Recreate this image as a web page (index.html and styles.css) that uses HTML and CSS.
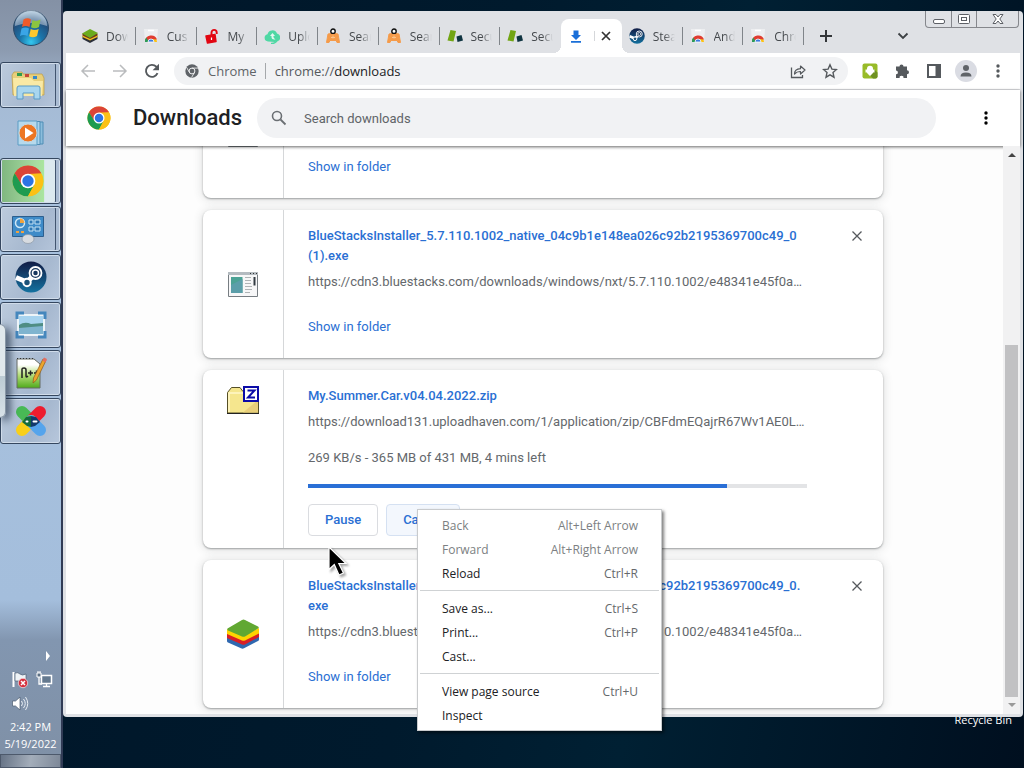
FILE: index.html
```html
<!DOCTYPE html>
<html lang="en">
<head>
<meta charset="utf-8">
<meta name="viewport" content="width=device-width, initial-scale=1">
<title>Downloads</title>
<link rel="stylesheet" href="styles.css">
</head>
<body>
<svg class="sprite" aria-hidden="true">
  <symbol id="chrome" viewBox="0 0 48 48">
    <circle cx="24" cy="24" r="23" fill="#fbc116"/>
    <path d="M4 12.500A23 23 0 0 1 44 12.500L24 13.500 14 30Z" fill="#db4437"/>
    <path d="M4 12.500A23 23 0 0 0 24 47L33.500 29.500H14.500Z" fill="#1e9b50"/>
    <path d="M24 13.500H44.500A23 23 0 0 1 24 47L33.500 29.500Z" fill="#fbc116"/>
    <circle cx="24" cy="24" r="11" fill="#fff"/>
    <circle cx="24" cy="24" r="8.500" fill="#2c74e4"/>
  </symbol>
  <symbol id="chrome-mono" viewBox="0 0 24 24">
    <circle cx="12" cy="12" r="11.500" fill="#5f6368"/>
    <circle cx="12" cy="12" r="5" fill="none" stroke="#f1f2f4" stroke-width="1.700"/>
    <path d="M12 7H22.500M7.700 14.500 2.500 5.500M16.300 14.500 11.300 23" stroke="#f1f2f4" stroke-width="1.500"/>
  </symbol>
  <symbol id="bluestacks" viewBox="0 0 32 30">
    <path d="M0 16v6q0 1 1 1.500l13 5.800q1.500.7 3 0L31 22q1-.5 1-1.500V15L16 22Z" fill="#2f68b0"/>
    <path d="M0 13v6l15 6.500q1.500.6 3 0L32 18v-5L16 20Z" fill="#d81f26"/>
    <path d="M0 10v5l15 6.500q1.500.6 3 0L32 14.500V9L16 17Z" fill="#ffd400"/>
    <path d="M.5 9.500 15 1q1.500-.8 3 0l13 6.500q1.500 1 0 2L18 17.500q-1.500.7-3 0L1 11.500q-1-1-.5-2Z" fill="#61a832"/>
  </symbol>
  <symbol id="bluestacks-dark" viewBox="0 0 32 30">
    <path d="M1 15v6l15 8 15-8v-6Z" fill="#2b2f3a"/>
    <path d="M1 12v5l15 7 15-7v-5Z" fill="#f3c11b"/>
    <path d="M1 10v4l15 7 15-7v-4Z" fill="#6d3b1c"/>
    <path d="M0 10 16 1l16 8-16 10Z" fill="#6aab1d"/>
  </symbol>
  <symbol id="webstore" viewBox="0 0 16 16">
    <path d="M1 1h14l-1 13H2Z" fill="#edeef0"/>
    <path d="M5 2.500h6" stroke="#fff" stroke-width="1.500"/>
    <path d="M2 14a6 6 0 0 1 12 0Z" fill="#fbc116"/>
    <path d="M2 13.500a6.200 6.200 0 0 1 12-2L8 11 5.500 14Z" fill="#e03c31"/>
    <path d="M2 14q-.2-3 1.200-4.500L6 14Z" fill="#2a9d58"/>
    <path d="M5 14a3 3 0 0 1 6 0Z" fill="#3c7be0" stroke="#fff" stroke-width=".8"/>
  </symbol>
  <symbol id="lock" viewBox="0 0 16 16">
    <path d="M7.500 7V4.500a2.600 2.600 0 0 1 5.200 0V6" fill="none" stroke="#e20612" stroke-width="1.900"/>
    <path d="m2 8 9-1.500 1 7L3.500 15Z" fill="#e20612" stroke="#e20612" stroke-width="1.500" stroke-linejoin="round"/>
    <path d="M7.500 9.500v2.500" stroke="#fff" stroke-width="1.200"/>
  </symbol>
  <symbol id="cloud" viewBox="0 0 16 16">
    <path d="M4 13.500a3.700 3.700 0 0 1-.5-7.300A5 5 0 0 1 13 5.500a4 4 0 0 1 1 7.500l-3 1Z" fill="#4fd8a4"/>
    <path d="M11.500 11.500Q7 12 7.500 8H6l2.500-3L11 8H9.300q0 2.500 2.200 3.500Z" fill="#e4f7f0"/>
    <path d="M7 15.500q3 .5 6-2.500" stroke="#4fd8a4" fill="none" stroke-width="1.500"/>
  </symbol>
  <symbol id="seat" viewBox="0 0 16 16">
    <path d="M3 6q5-1.500 10 0l1.500 8.500h-2.500L11 12.500H5L4 14.500H1.500Z" fill="#f59b4a" stroke="#f59b4a" stroke-linejoin="round"/>
    <path d="M8 7.500v3m-2-1h4" stroke="#fbc48c"/>
    <circle cx="8" cy="3.200" r="2.200" fill="#fff" stroke="#111" stroke-width="1.400"/>
  </symbol>
  <symbol id="secure" viewBox="0 0 16 16">
    <path d="M3.500 2 9 3 6.500 13.500.500 12.500Z" fill="#72a514"/>
    <path d="m9.500 8.500 5-1.500 1.500 5.500-5.500 1.500Z" fill="#0f3440"/>
  </symbol>
  <symbol id="steam" viewBox="0 0 32 32">
    <circle cx="16" cy="16" r="15.500" fill="url(#steam-fill)"/>
    <path d="M1 16.500 12 21l8-8" fill="none" stroke="#fff" stroke-width="5"/>
    <circle cx="20.500" cy="12" r="6" fill="#17365c" stroke="#fff" stroke-width="1.800"/>
    <circle cx="20.500" cy="12" r="3" fill="none" stroke="#fff" stroke-width="1.500"/>
    <circle cx="12" cy="21.500" r="3.700" fill="#1b5379" stroke="#fff" stroke-width="2"/>
  </symbol>
  <linearGradient id="steam-fill" x2="0" y2="1"><stop stop-color="#111c45"/><stop offset="1" stop-color="#1472a0"/></linearGradient>
  <symbol id="exe" viewBox="0 0 32 32">
    <path d="M1.500 4.500h29v24h-29Z" fill="#f7f7f8" stroke="#777d82"/>
    <path d="M1 4h30v3H1Z" fill="#b4bbc0"/>
    <path d="M23 5.500h1m2 0h1m2 0h1" stroke="#333"/>
    <path d="M4 9h11.500v16H4Z" fill="#4ca295"/>
    <path d="M4 17v8h11.500V11Z" fill="#5b9ea9"/>
    <path d="M18 9.500h6m-6 3h6m-6 3h6m-6 3h7m-7 3h7m-7 3h5" stroke="#afb4b6"/>
    <path d="M27.500 9v8.500" stroke="#333b42" stroke-width="2"/>
  </symbol>
  <symbol id="zip" viewBox="0 0 32 32">
    <path d="M.5 28V7.500l4-5H13l3 4h15.500V28Z" fill="#f5e68e" stroke="#554f27"/>
    <path d="M1.500 8h29M2 8v19" stroke="#fff8c9" stroke-width="1.500"/>
    <path d="M16 27.500 31 15v12.500Z" fill="#e9cf7a"/>
    <path d="M0 28.500h32" stroke="#222"/>
    <path d="M17 2h14v14h-14Z" fill="#fff" stroke="#0b0ba8" stroke-width="2"/>
    <path d="M20.500 5.500h7l-6.500 7h7" fill="none" stroke="#0b0ba8" stroke-width="2"/>
  </symbol>
  <symbol id="cross" viewBox="0 0 16 16"><path d="m3.500 3.500 9 9m0-9-9 9" stroke="currentColor" stroke-width="1.300"/></symbol>
  <symbol id="dots" viewBox="0 0 16 16"><circle cx="8" cy="3" r="1.700"/><circle cx="8" cy="8" r="1.700"/><circle cx="8" cy="13" r="1.700"/></symbol>
</svg>

<div class="desktop">
  <nav class="taskbar" aria-label="Taskbar">
    <button class="start" aria-label="Start">
      <svg width="38" height="38" viewBox="0 0 38 38">
        <defs><radialGradient id="orb" cx=".5" cy=".9" r=".9"><stop stop-color="#35c8ef"/><stop offset=".35" stop-color="#1a76ab"/><stop offset=".7" stop-color="#23507e"/><stop offset="1" stop-color="#9ec0da"/></radialGradient></defs>
        <circle cx="19" cy="19" r="17.500" fill="url(#orb)" stroke="#2b4967"/>
        <path d="M3 17A16 16 0 0 1 35 17Q19 11 3 17Z" fill="#fff" opacity=".4"/>
        <path d="M11.500 10.500q4-2.500 7.500 0l-1.500 7.500q-4-2-7.500 0Z" fill="#ef5a29"/>
        <path d="M20.500 11q4 2 8-.5L27 18q-4 2.500-8 .3Z" fill="#8cc63f"/>
        <path d="M9.500 19.500q4-2 7.500 0L15.500 27q-4-2-7.500 0Z" fill="#3aa5e6"/>
        <path d="M18.700 20q4 2 8 0L25 27q-4 2.500-7.800.3Z" fill="#fdc82f"/>
      </svg>
    </button>
    <button class="task task--stack" aria-label="File Explorer">
      <svg width="34" height="30" viewBox="0 0 34 30">
        <path d="M1 5 3 2h8l1 2h19l2 4v17H2Z" fill="#e8cf7b" stroke="#bb9b45" stroke-width=".7"/>
        <path d="M6 3h5v3H6Z" fill="#2f9b4e"/><path d="M14 4h4v3h-4Z" fill="#c6473a"/><path d="M22 6h4v3h-4Z" fill="#3788c8"/>
        <path d="M2 8h18l3 3h9l-1 15H3Z" fill="#f9e9a5"/>
        <path d="M6 29V18q0-2 2-2h19q2 0 2 2v11h-6v-6H12v6Z" fill="#a8d6ef" stroke="#5a9bc5"/>
      </svg>
    </button>
    <button class="task task--plain" aria-label="Media Player">
      <svg width="28" height="28" viewBox="0 0 28 28">
        <path d="M12 3h14v22H12Z" fill="#8bbddc" stroke="#4f8db5"/><path d="M10 2.500h13v23H10Z" fill="#a9d2ea" stroke="#4f8db5"/>
        <path d="M1 2h19v24H1Z" fill="#b6d9ec" stroke="#5b9cc4"/><circle cx="11" cy="14" r="9" fill="#ed7622" stroke="#c7d7df"/><path d="M8 8.500v11l8.500-5.500Z" fill="#fff"/>
      </svg>
    </button>
    <button class="task task--stack task--active" aria-label="Google Chrome"><svg width="32" height="32"><use href="#chrome"/></svg></button>
    <button class="task task--stack" aria-label="Control Panel">
      <svg width="34" height="30" viewBox="0 0 34 30">
        <path d="M1.500 2.500h31v20h-31Z" fill="#3e8bc8" stroke="#2d5f8e"/><circle cx="9" cy="9" r="4.500" fill="none" stroke="#cfe7f5" stroke-width="1.500"/><path d="M9 4.500A4.500 4.500 0 0 1 13.500 9H9Z" fill="#f2a33c"/>
        <path d="M18 6h4v4h-4Zm6 0h5v4h-5Zm-6 7h4v4h-4Zm6 0h5v4h-5Z" fill="#2d76b3" stroke="#c5e2f4"/><path d="M5 18h3m2 0h3" stroke="#f2a33c" stroke-width="2"/>
        <ellipse cx="17" cy="25" rx="6" ry="4.500" fill="#d7dbe0" stroke="#8d98a5" stroke-width=".7"/>
      </svg>
    </button>
    <button class="task" aria-label="Steam"><svg width="32" height="32"><use href="#steam"/></svg></button>
    <button class="task" aria-label="Photo Viewer">
      <svg width="32" height="28" viewBox="0 0 32 28">
        <path d="M3 4h26v20H3Z" fill="#a7d3ef" stroke="#edf4f8" stroke-width="2"/><path d="M4 14q6-4 12-1l12-1v11H4Z" fill="#4f8d84"/><path d="M4 17l24-2v8H4Z" fill="#7fb4cf"/>
        <path d="M2 8V2h7M23 2h7v6M2 20v6h7m14 0h7v-6" fill="none" stroke="#4587bd" stroke-width="3"/>
      </svg>
    </button>
    <button class="task" aria-label="Notepad++">
      <svg width="34" height="34" viewBox="0 0 34 34">
        <defs><linearGradient id="npp" x2="0" y2="1"><stop offset=".2" stop-color="#fff"/><stop offset=".55" stop-color="#b6de7b"/><stop offset="1" stop-color="#4faa1b"/></linearGradient></defs>
        <path d="M3 3h17l6 5v24H3Z" fill="url(#npp)" stroke="#676c65"/><path d="M3 2.500h18" stroke="#333" stroke-dasharray="1 2"/>
        <path d="M8 22v-9q0-1 2-1 2 0 2 2v6q0 2 2 0M14 17h5m-2.500-2.500v5M20 17h5m-2.500-2.500v5" fill="none" stroke="#222" stroke-width="1.500"/>
        <path d="m19 27 .5-5L29 3l3 1.500L22.500 24Z" fill="#eba52d" stroke="#8d5a1a" stroke-width=".7"/><path d="m28.500 4.500 1.500-3 3 1.500-1.500 3.500Z" fill="#e46d5f"/>
      </svg>
    </button>
    <button class="task" aria-label="Game launcher">
      <svg width="34" height="34" viewBox="0 0 34 34" stroke-width="12" stroke-linecap="round">
        <path d="m8 8 9 9" stroke="#48b955"/><path d="m26 8-9 9" stroke="#ed1c2e"/><path d="m8 26 9-9" stroke="#f8cf19"/><path d="m26 26-9-9" stroke="#55a4ec"/>
        <path d="m17 12 5 1 4 5-5 4-4 1Z" fill="#12396c" stroke="none"/><path d="m17 12-5 1-4 5 5 4 4 1Z" fill="#126b3d" stroke="none"/>
        <path d="M12.500 17.500h1m6 0h3" stroke="#fff" stroke-width="2"/>
      </svg>
    </button>

    <div class="tray">
      <button class="tray-more" aria-label="Show hidden icons"><svg width="6" height="10" viewBox="0 0 6 10"><path d="m1 0 4 5-4 5Z" fill="#fff"/></svg></button>
      <div class="tray-icons">
        <svg width="18" height="18" viewBox="0 0 18 18"><path d="M2.500 1v15" stroke="#fff" stroke-width="2"/><path d="M4 2q3-1 5 1t6 0v7H4Z" fill="#eef3f7" stroke="#4f6074" stroke-width=".7"/><circle cx="12" cy="12" r="4.700" fill="#d5303e" stroke="#fff" stroke-width=".6"/><path d="m10 10 4 4m0-4-4 4" stroke="#fff" stroke-width="1.500"/></svg>
        <svg width="18" height="18" viewBox="0 0 18 18"><path d="M5.500 4.500h10v8h-10Z" fill="#64798f" stroke="#fff" stroke-width="1.500"/><path d="M10.500 13v2M7 15.500h7M3 5v8h3" fill="none" stroke="#fff" stroke-width="1.300"/><path d="M1 2h4v4H1ZM2 0v2m2-2v2" fill="#5c7085" stroke="#fff"/></svg>
        <svg width="18" height="18" viewBox="0 0 18 18"><path d="M1.500 6h3L9 2v13l-4.500-4h-3Z" fill="#fff" stroke="#4b5c70" stroke-width=".7"/><path d="M10.500 6q2 2.500 0 5m2-7q3.500 4.500 0 9m2-11q4.500 6.500 0 13" fill="none" stroke="#e9eff5"/></svg>
      </div>
      <div class="clock"><time>2:42 PM</time><time>5/19/2022</time></div>
      <button class="show-desktop" aria-label="Show desktop"></button>
    </div>
    <div class="peek"></div>
  </nav>

  <div class="stage">
    <span class="shortcut">Recycle Bin</span>
    <div class="window">
      <header class="tabstrip">
        <div class="tabs">
          <button class="tab"><svg><use href="#bluestacks-dark"/></svg><span>Dow</span></button>
          <button class="tab"><svg><use href="#webstore"/></svg><span>Cus</span></button>
          <button class="tab"><svg><use href="#lock"/></svg><span>My</span></button>
          <button class="tab"><svg><use href="#cloud"/></svg><span>Uplo</span></button>
          <button class="tab"><svg><use href="#seat"/></svg><span>Sear</span></button>
          <button class="tab"><svg><use href="#seat"/></svg><span>Sear</span></button>
          <button class="tab"><svg><use href="#secure"/></svg><span>Secu</span></button>
          <button class="tab tab--last"><svg><use href="#secure"/></svg><span>Secu</span></button>
          <div class="tab tab--current">
            <svg viewBox="0 0 16 16"><path d="M5.500 2.500h5V7H13l-5 5-5-5h2.500ZM3 13h10v1.800H3Z" fill="#1a6fd8"/></svg>
            <i></i>
            <button class="tab-close" aria-label="Close tab"><svg viewBox="0 0 14 14"><path d="m3 3 8 8m0-8-8 8" stroke="currentColor" stroke-width="1.700"/></svg></button>
          </div>
          <button class="tab"><svg><use href="#steam"/></svg><span>Stea</span></button>
          <button class="tab"><svg><use href="#webstore"/></svg><span>And</span></button>
          <button class="tab"><svg><use href="#webstore"/></svg><span>Chro</span></button>
        </div>
        <button class="new-tab" aria-label="New tab"><svg width="14" height="14" viewBox="0 0 14 14"><path d="M7 1v12M1 7h12" stroke="#333639" stroke-width="2"/></svg></button>
        <button class="tab-search" aria-label="Search tabs"><svg width="12" height="8" viewBox="0 0 12 8"><path d="m1.500 1.500 4.500 4.500 4.500-4.500" fill="none" stroke="#3c4043" stroke-width="1.800"/></svg></button>
        <div class="caption">
          <button aria-label="Minimize"><svg width="14" height="14" viewBox="0 0 14 14"><rect x="1.500" y="7.500" width="11" height="4" rx="1.500"/></svg></button>
          <button aria-label="Restore"><svg width="14" height="14" viewBox="0 0 14 14"><rect x="1.500" y="2.500" width="11" height="9" rx="1"/><rect x="4.500" y="5.500" width="5" height="3"/></svg></button>
          <button aria-label="Close"><svg width="14" height="14" viewBox="0 0 14 14"><path d="M2 2.500h3l2 2.500 2-2.500h3L8.800 7l3.200 4.500H9L7 9l-2 2.500H2L5.200 7Z"/></svg></button>
        </div>
      </header>

      <div class="toolbar">
        <button class="tool tool--off" aria-label="Back"><svg viewBox="0 0 16 16"><path d="M15 8H2m6-6L2 8l6 6" fill="none" stroke="currentColor" stroke-width="1.500"/></svg></button>
        <button class="tool tool--off" aria-label="Forward"><svg viewBox="0 0 16 16"><path d="M1 8h13M8 2l6 6-6 6" fill="none" stroke="currentColor" stroke-width="1.500"/></svg></button>
        <button class="tool" aria-label="Reload"><svg viewBox="0 0 16 16"><path d="M13.500 10.200A6 6 0 1 1 12.300 3.700L14 5.500" fill="none" stroke="currentColor" stroke-width="1.900"/><path d="M15 .8v6.400H8.600Z" fill="currentColor"/></svg></button>
        <div class="omnibox">
          <svg class="omnibox-logo"><use href="#chrome-mono"/></svg>
          <span class="origin">Chrome</span>
          <span class="url">chrome://<b>downloads</b></span>
          <button class="tool" aria-label="Share"><svg viewBox="0 0 16 16"><path d="M1.500 4.500v10h11V12" fill="none" stroke="currentColor" stroke-width="1.300"/><path d="M4.500 11q0-5 6-5.300V3l4.500 4-4.500 4V8.500Q7 8.300 4.500 11Z" fill="none" stroke="currentColor" stroke-width="1.200" stroke-linejoin="round"/></svg></button>
          <button class="tool" aria-label="Bookmark"><svg viewBox="0 0 16 16"><path d="m8 1.800 1.900 4.300 4.600.4-3.500 3.100 1 4.600L8 11.800l-4 2.400 1-4.600-3.500-3.100 4.600-.4Z" fill="none" stroke="currentColor" stroke-width="1.400"/></svg></button>
        </div>
        <div class="actions">
          <button class="tool" aria-label="APK extension"><svg viewBox="0 0 16 16"><rect x=".5" y=".5" width="15" height="15" rx="2" fill="#98bb28"/><path d="M11.500 6 15.500 9.500v4q0 2-2 2H11L8 12.500Z" fill="#6f9121"/><path d="M5 5.800a3 3 0 0 1 6 0V6.500h1.500v3H11v.5L8 13l-3-3v-.5H3.500v-3H5Z" fill="#fff"/></svg></button>
          <button class="tool" aria-label="Extensions"><svg viewBox="0 0 16 16"><path d="M2 3.500h3.500a2 2 0 1 1 4 0H13v3.800a2 2 0 1 1 0 4V15H9.400a1.900 1.900 0 1 0-3.700 0H2v-3.700a1.900 1.900 0 1 0 0-3.800Z" fill="currentColor"/></svg></button>
          <button class="tool" aria-label="Side panel"><svg viewBox="0 0 16 16"><path d="M1 1h14v14H1Zm2 2v10h6.500V3Z" fill="currentColor" fill-rule="evenodd"/></svg></button>
          <button class="tool" aria-label="Profile"><span class="avatar"><svg viewBox="0 0 16 16"><circle cx="8" cy="5" r="3" fill="#5f6368"/><path d="M2.500 13.500q0-4 5.500-4t5.500 4Z" fill="#5f6368"/></svg></span></button>
          <button class="tool" aria-label="Menu"><svg fill="currentColor"><use href="#dots"/></svg></button>
        </div>
      </div>

      <div class="page-head">
        <svg class="brand"><use href="#chrome"/></svg>
        <h1>Downloads</h1>
        <label class="search">
          <svg width="16" height="16" viewBox="0 0 16 16"><circle cx="6" cy="6" r="4.500" fill="none" stroke="#6b6f73" stroke-width="1.600"/><path d="m9.500 9.500 5 5" stroke="#6b6f73" stroke-width="1.800"/></svg>
          <input type="search" placeholder="Search downloads" aria-label="Search downloads">
        </label>
        <button class="page-menu" aria-label="More actions"><svg><use href="#dots"/></svg></button>
      </div>

      <div class="view">
        <main class="list">
          <article class="card card--short">
            <div class="card-icon"><svg><use href="#exe"/></svg></div>
            <div class="card-body"><a class="link" href="#">Show in folder</a></div>
          </article>
          <article class="card">
            <div class="card-icon"><svg><use href="#exe"/></svg></div>
            <div class="card-body">
              <a class="name" href="#">BlueStacksInstaller_5.7.110.1002_native_04c9b1e148ea026c92b2195369700c49_0 (1).exe</a>
              <a class="source" href="#">https://cdn3.bluestacks.com/downloads/windows/nxt/5.7.110.1002/e48341e45f0a…</a>
              <a class="link" href="#">Show in folder</a>
            </div>
            <button class="remove" aria-label="Remove from list"><svg><use href="#cross"/></svg></button>
          </article>
          <article class="card card--active">
            <div class="card-icon"><svg><use href="#zip"/></svg></div>
            <div class="card-body">
              <a class="name" href="#">My.Summer.Car.v04.04.2022.zip</a>
              <a class="source" href="#">https://download131.uploadhaven.com/1/application/zip/CBFdmEQajrR67Wv1AE0L…</a>
              <p class="status">269 KB/s - 365 MB of 431 MB, 4 mins left</p>
              <div class="meter" role="progressbar" aria-label="Download progress" aria-valuenow="84"><div style="width:84%"></div></div>
              <div class="buttons"><button>Pause</button><button class="hover">Cancel</button></div>
            </div>
          </article>
          <article class="card">
            <div class="card-icon"><svg><use href="#bluestacks"/></svg></div>
            <div class="card-body">
              <a class="name" href="#">BlueStacksInstaller_5.7.110.1002_native_04c9b1e148ea026c92b2195369700c49_0.<wbr>exe</a>
              <a class="source" href="#">https://cdn3.bluestacks.com/downloads/windows/nxt/5.7.110.1002/e48341e45f0a…</a>
              <a class="link" href="#">Show in folder</a>
            </div>
            <button class="remove" aria-label="Remove from list"><svg><use href="#cross"/></svg></button>
          </article>
        </main>
        <div class="scrollbar">
          <svg width="8" height="5" viewBox="0 0 8 5"><path d="m0 5 4-4 4 4Z" fill="#444"/></svg>
          <div class="track"><div class="thumb"></div></div>
          <svg width="8" height="5" viewBox="0 0 8 5"><path d="m0 0 4 4 4-4Z" fill="#999"/></svg>
        </div>
      </div>
    </div>
  </div>

  <div class="menu" role="menu">
    <button role="menuitem" disabled>Back<kbd>Alt+Left Arrow</kbd></button>
    <button role="menuitem" disabled>Forward<kbd>Alt+Right Arrow</kbd></button>
    <button role="menuitem">Reload<kbd>Ctrl+R</kbd></button>
    <hr>
    <button role="menuitem">Save as...<kbd>Ctrl+S</kbd></button>
    <button role="menuitem">Print...<kbd>Ctrl+P</kbd></button>
    <button role="menuitem">Cast...</button>
    <hr>
    <button role="menuitem">View page source<kbd>Ctrl+U</kbd></button>
    <button role="menuitem">Inspect</button>
  </div>
  <svg class="cursor" width="20" height="31" viewBox="0 0 20 31"><path d="M1 1v22.500l5.300-5 4.700 10.500 4.500-2-4.700-9.500H18Z" fill="#000" stroke="#fff" stroke-width="1.200"/></svg>
</div>
</body>
</html>
```

FILE: styles.css
```css
* { box-sizing: border-box; }

body {
  margin: 0;
  font-family: Roboto, "Liberation Sans", sans-serif;
  font-size: 13px;
  color: #202124;
}

button {
  margin: 0;
  padding: 0;
  border: 0;
  background: none;
  font: inherit;
  color: inherit;
}

a { text-decoration: none; }
svg { display: block; flex: none; }
.sprite { position: absolute; width: 0; height: 0; }

.desktop {
  position: relative;
  display: flex;
  height: 100vh;
  overflow: hidden;
  background: linear-gradient(100deg, #001629 0%, #001a2d 45%, #002033 65%, #000f1f 100%);
}

/* Taskbar */
.taskbar {
  position: relative;
  display: flex;
  flex-direction: column;
  gap: 2px;
  width: 63px;
  flex: none;
  border-right: 2px solid #303b55;
  background: linear-gradient(#8491a5 0, #8c9bb0 50px, #a5bbd5 100px, #a9c2de 200px, #a4bedc 600px, #8296b0 640px, #7f90a6 100%);
}

.start { display: grid; place-items: center; height: 56px; margin-bottom: 4px; }

.task {
  display: grid;
  place-items: center;
  height: 46px;
  border: 1px solid #35475f;
  border-radius: 3px;
  background: linear-gradient(120deg, #bccbdd, #a6b8cf 60%, #b7c7dc);
  box-shadow: inset 0 0 0 1px #d0dcea;
}
.task--stack { padding-right: 5px; box-shadow: inset 0 0 0 1px #d0dcea, inset -4px 0 #a9bbd2, inset -5px 0 #42556f; }
.task--plain { border-color: transparent; background: none; box-shadow: none; }
.task--active { background: linear-gradient(90deg, #7fb67f, #a8dca1 60%, #a9e59e 72%, #dce9ef 74%); }

.tray { display: flex; flex-direction: column; margin-top: auto; color: #fff; font-family: "Open Sans", sans-serif; font-size: 11px; }
.tray-more { align-self: flex-end; padding: 5px 10px; }
.tray-icons { display: flex; flex-wrap: wrap; gap: 6px 7px; padding: 5px 6px 5px 11px; }
.clock { display: flex; flex-direction: column; align-items: center; line-height: 17px; white-space: nowrap; }
.show-desktop { height: 14px; margin-top: 2px; border: 1px solid #4d596b; background: linear-gradient(100deg, #667386, #a3adba 50%, #7d8898); }

.peek {
  position: absolute;
  left: 0;
  top: 324px;
  width: 6px;
  height: 94px;
  border: 1px solid #8796a5;
  border-left: 0;
  border-radius: 0 6px 6px 0;
  background: linear-gradient(#e0e8ec 55%, #bccbd4 56%, #d8e2e8);
  box-shadow: 3px 3px 9px #1a2a3f;
}

/* Browser window */
.stage { position: relative; display: flex; flex: 1; min-width: 0; padding: 11px 1px 51px 0; }

.shortcut {
  position: absolute;
  right: 12px;
  bottom: 40px;
  color: #fff;
  font-family: "Open Sans", sans-serif;
  font-size: 11px;
  line-height: 16px;
}

.window {
  position: relative;
  display: flex;
  flex-direction: column;
  flex: 1;
  min-width: 0;
  padding: 0 3px 3px;
  border-radius: 4px;
  background: #dfe1e5;
  overflow: hidden;
}

.tabstrip {
  display: flex;
  align-items: flex-end;
  height: 42px;
  padding: 0 1px 0 9px;
  font-family: "Open Sans", sans-serif;
  font-size: 12px;
  color: #45494d;
}

.tabs { display: grid; grid-auto-flow: column; grid-auto-columns: minmax(0, 1fr); flex: 0 1 729px; min-width: 0; }

.tab {
  position: relative;
  display: flex;
  align-items: center;
  min-width: 0;
  height: 34px;
  padding: 0 8px 0 7px;
  gap: 8px;
  text-align: left;
}
.tab svg { width: 16px; height: 16px; }
.tab span { flex: 1; min-width: 0; overflow: hidden; white-space: nowrap; mask-image: linear-gradient(90deg, #000 50%, transparent 100%); }
.tab::after { content: ""; position: absolute; right: 0; top: 8px; width: 1px; height: 18px; background: #80858a; }
.tab--last::after { display: none; }

.tab--current { padding-right: 0; border-radius: 8px 8px 0 0; background: #fff; }
.tab--current::before, .tab--current::after {
  content: "";
  position: absolute;
  top: auto;
  bottom: 0;
  width: 8px;
  height: 8px;
}
.tab--current::before { left: -8px; background: radial-gradient(circle at 0 0, transparent 8px, #fff 8px); }
.tab--current::after { right: -8px; background: radial-gradient(circle at 100% 0, transparent 8px, #fff 8px); }
.tab--current i { width: 1px; height: 10px; margin-left: 2px; background: #d5d7da; }
.tab--current .tab-close { margin-left: -4px; color: #333; }
.tab--current .tab-close svg { width: 14px; height: 14px; }

.new-tab { display: grid; place-items: center; width: 28px; height: 34px; margin-left: 8px; }
.tab-search { display: grid; place-items: center; width: 28px; height: 34px; margin: 0 8px 0 auto; }

.caption {
  display: flex;
  align-self: flex-start;
  height: 17px;
  border: 1px solid #85878c;
  border-top: 0;
  border-radius: 0 0 4px 4px;
}
.caption button { display: grid; place-items: center; width: 25px; }
.caption button + button { border-left: 1px solid #85878c; }
.caption button:last-child { width: 42px; }
.caption svg { fill: #fff; stroke: #5d6066; }

.toolbar {
  display: flex;
  align-items: center;
  height: 37px;
  padding: 0 6px;
  border-bottom: 1px solid #dcdde0;
  background: #fff;
  font-family: "Open Sans", sans-serif;
  color: #55595d;
}
.tool { display: grid; place-items: center; width: 32px; height: 28px; flex: none; }
.tool svg { width: 16px; height: 16px; }
.tool--off { color: #babcbe; }

.omnibox {
  display: flex;
  align-items: center;
  flex: 1;
  min-width: 0;
  height: 28px;
  margin: 0 6px;
  padding: 0 2px 0 11px;
  border-radius: 14px;
  background: #f1f2f4;
  font-size: 13px;
}
.omnibox-logo { width: 14px; height: 14px; margin-right: 9px; }
.origin { padding-right: 8px; border-right: 1px solid #a5a8ab; line-height: 16px; color: #606468; }
.url { flex: 1; padding-left: 9px; color: #55595d; }
.url b { font-weight: 400; color: #202124; }

.actions { display: flex; }
.avatar { display: grid; place-items: center; width: 22px; height: 22px; border-radius: 50%; background: #dadce3; }

/* Downloads page */
.page-head {
  position: relative;
  z-index: 1;
  display: flex;
  align-items: center;
  height: 56px;
  flex: none;
  padding: 0 26px 0 21px;
  background: #fff;
  box-shadow: 0 1px 3px rgba(0, 0, 0, .6);
}
.brand { width: 24px; height: 24px; }
.page-head h1 { margin: 0 15px 0 22px; font-size: 22px; font-weight: 500; line-height: 28px; }
.search {
  display: flex;
  align-items: center;
  gap: 17px;
  flex: 0 1 679px;
  min-width: 0;
  height: 40px;
  padding: 0 14px;
  border-radius: 20px;
  background: #f1f2f4;
}
.search input { flex: 1; min-width: 0; padding: 0; border: 0; outline: 0; background: none; font: inherit; }
.search input::placeholder { color: #606468; opacity: 1; }
.page-menu { margin-left: auto; }
.page-menu svg { width: 16px; height: 16px; }

.view { display: flex; flex: 1; min-height: 0; background: #fdfdfd; }

.list {
  display: flex;
  flex-direction: column;
  justify-content: flex-end;
  align-items: center;
  gap: 12px;
  flex: 1;
  min-width: 0;
  overflow: hidden;
  padding: 0 0 6px 17px;
}

.card {
  position: relative;
  display: flex;
  flex: none;
  width: 100%;
  max-width: 680px;
  min-height: 148px;
  border-radius: 8px;
  background: #fff;
  box-shadow: 0 1px 2px rgba(60, 64, 67, .45), 0 1px 8px 2px rgba(60, 64, 67, .12);
}
.card--short { min-height: 128px; }
.card--active { min-height: 178px; }

.card-icon { display: grid; place-items: center; width: 81px; flex: none; border-right: 1px solid #d5d7d9; }
.card-icon svg { width: 32px; height: 32px; }
.card--active .card-icon { align-items: start; padding-top: 15px; }

.card-body { display: flex; flex-direction: column; align-items: flex-start; flex: 0 1 523px; min-width: 0; padding: 16px 0 21px 24px; line-height: 20px; }
.card--active .card-body { padding-bottom: 12px; }

.name { font-weight: 500; color: #2a6fd3; overflow-wrap: anywhere; }
.source { max-width: 100%; margin-top: 6px; overflow: hidden; white-space: nowrap; color: #64686c; }
.link { margin-top: auto; color: #2a6fd3; }
.status { margin: 16px 0; color: #64686c; }
.meter { width: 100%; height: 4px; background: #e3e4e6; }
.meter div { height: 100%; background: #2a6fd6; }
.buttons { display: flex; gap: 8px; margin-top: auto; }
.buttons button { height: 32px; padding: 0 16px; border: 1px solid #dadce0; border-radius: 4px; color: #2a6fd3; font-weight: 500; }
.buttons .hover { background: #f3f7fd; border-color: #d5e1f2; }

.remove { align-self: flex-start; margin: 18px 18px 0 auto; color: #55595d; }
.remove svg { width: 16px; height: 16px; }

.scrollbar {
  position: relative;
  z-index: 2;
  display: flex;
  flex-direction: column;
  align-items: center;
  gap: 6px;
  width: 17px;
  padding: 6px 0;
  background: #f1f1f2;
}
.track { display: flex; flex: 1; width: 13px; align-items: flex-end; }
.thumb { width: 100%; height: 66%; background: #c1c1c3; }

/* Context menu and pointer */
.menu {
  position: absolute;
  left: 417px;
  top: 509px;
  display: flex;
  flex-direction: column;
  width: 245px;
  padding: 4px 2px 2px;
  border: 1px solid #c9cbcd;
  background: #fff;
  box-shadow: 2px 2px 3px rgba(0, 0, 0, .5);
  font-family: "Open Sans", sans-serif;
  font-size: 12px;
}
.menu button { display: flex; align-items: center; justify-content: space-between; height: 24px; padding: 0 21px 2px 22px; color: #202124; }
.menu kbd { font: inherit; color: #65686b; }
.menu button:disabled, .menu button:disabled kbd { color: #7c7f82; }
.menu hr { width: 100%; height: 1px; margin: 4px 0 6px; border: 0; background: #cfd2d4; }

.cursor { position: absolute; left: 328px; top: 546px; filter: drop-shadow(2px 2px 1px rgba(0, 0, 0, .35)); }
```
